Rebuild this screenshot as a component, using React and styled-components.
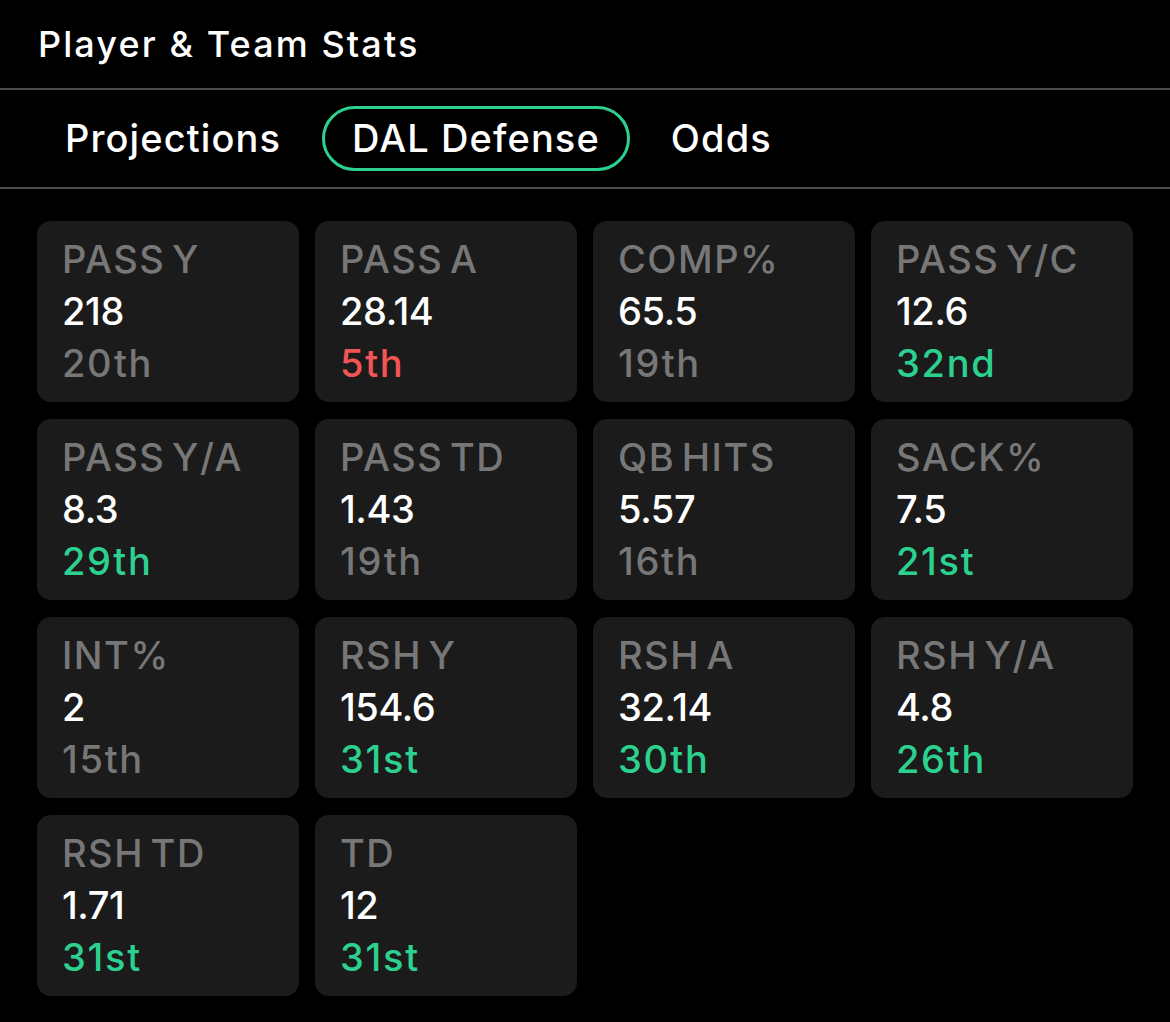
import React from 'react';
import styled, { createGlobalStyle } from 'styled-components';

const GlobalStyle = createGlobalStyle`
  html, body {
    margin: 0;
    padding: 0;
    background: #000;
  }
  body {
    font-family: Inter, "Noto Sans", "Liberation Sans", sans-serif;
    color: #fff;
    -webkit-font-smoothing: antialiased;
  }
`;

const Page = styled.div`
  width: 1170px;
  min-height: 1022px;
  background: #000;
`;

const Header = styled.div`
  padding: 24px 38px;
  font-size: 36px;
  line-height: 40px;
  font-weight: 500;
  letter-spacing: 2.1px;
  border-bottom: 2px solid #4a4a4a;
`;

const Tabs = styled.div`
  display: flex;
  align-items: center;
  gap: 11px;
  padding: 16px 35px;
  border-bottom: 2px solid #4a4a4a;
`;

const Tab = styled.div`
  padding: 8px 27px;
  border: 3px solid ${(p) => (p.$active ? '#2dd18f' : 'transparent')};
  border-radius: 999px;
  font-size: 38px;
  line-height: 43px;
  font-weight: 500;
  letter-spacing: 1.1px;
  color: #fff;
`;

const Grid = styled.div`
  display: grid;
  grid-template-columns: repeat(4, 262px);
  column-gap: 16px;
  row-gap: 17px;
  padding: 32px 37px;
`;

const Card = styled.div`
  background: #1b1b1b;
  border-radius: 14px;
  padding: 12px 25px 13px;
  display: flex;
  flex-direction: column;
  font-size: 38px;
  line-height: 52px;
  font-weight: 500;
`;

const Label = styled.div`
  color: #777;
  white-space: nowrap;
  letter-spacing: 1.5px;
  word-spacing: -5px;
`;

const Value = styled.div`
  color: #fff;
  letter-spacing: -0.4px;
`;

const rankColors = {
  good: '#2dd18f',
  bad: '#f25555',
  neutral: '#777',
};

const Rank = styled.div`
  color: ${(p) => rankColors[p.$tone]};
  letter-spacing: 1.7px;
`;

const stats = [
  { label: 'PASS Y', value: '218', rank: '20th', tone: 'neutral' },
  { label: 'PASS A', value: '28.14', rank: '5th', tone: 'bad' },
  { label: 'COMP%', value: '65.5', rank: '19th', tone: 'neutral' },
  { label: 'PASS Y/C', value: '12.6', rank: '32nd', tone: 'good' },
  { label: 'PASS Y/A', value: '8.3', rank: '29th', tone: 'good' },
  { label: 'PASS TD', value: '1.43', rank: '19th', tone: 'neutral' },
  { label: 'QB HITS', value: '5.57', rank: '16th', tone: 'neutral' },
  { label: 'SACK%', value: '7.5', rank: '21st', tone: 'good' },
  { label: 'INT%', value: '2', rank: '15th', tone: 'neutral' },
  { label: 'RSH Y', value: '154.6', rank: '31st', tone: 'good' },
  { label: 'RSH A', value: '32.14', rank: '30th', tone: 'good' },
  { label: 'RSH Y/A', value: '4.8', rank: '26th', tone: 'good' },
  { label: 'RSH TD', value: '1.71', rank: '31st', tone: 'good' },
  { label: 'TD', value: '12', rank: '31st', tone: 'good' },
];

export default function App() {
  return (
    <Page>
      <GlobalStyle />
      <Header>Player &amp; Team Stats</Header>
      <Tabs>
        <Tab>Projections</Tab>
        <Tab $active>DAL Defense</Tab>
        <Tab>Odds</Tab>
      </Tabs>
      <Grid>
        {stats.map((s) => (
          <Card key={s.label}>
            <Label>{s.label}</Label>
            <Value>{s.value}</Value>
            <Rank $tone={s.tone}>{s.rank}</Rank>
          </Card>
        ))}
      </Grid>
    </Page>
  );
}
